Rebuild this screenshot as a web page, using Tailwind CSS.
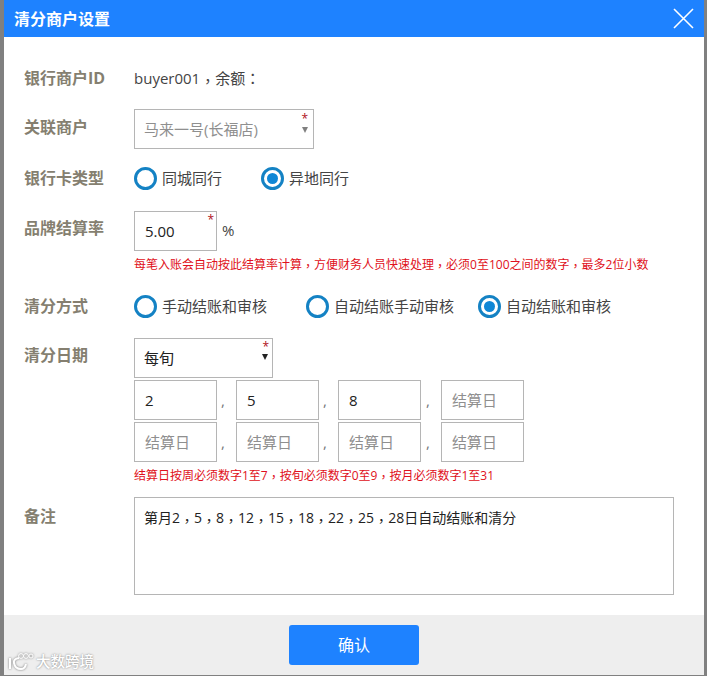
<!DOCTYPE html>
<html lang="en">

<head>
    <meta charset="UTF-8">
    <meta name="viewport" content="width=device-width, initial-scale=1.0">
    <title>清分商户设置</title>
    <script src="https://cdn.jsdelivr.net/npm/@tailwindcss/browser@4"></script>
</head>

<body class="bg-[#808080] font-['Open_Sans','Noto_Sans_CJK_SC',sans-serif]">
    <div class="relative w-[707px] h-[676px] overflow-hidden pl-1 pb-px">
        <div class="flex flex-col w-[700px] h-[675px] bg-white">
            <!-- header -->
            <div class="flex items-center justify-between h-[37px] bg-[#1e82ff] pl-[10px] pr-[10px] shrink-0">
                <h2 class="text-[16px] font-bold text-white">清分商户设置</h2>
                <svg width="21" height="21" viewBox="0 0 21 21" class="stroke-white" fill="none" stroke-width="1.6">
                    <path d="M1 1 L20 20 M20 1 L1 20" />
                </svg>
            </div>

            <!-- form -->
            <div class="flex-1 pl-5 pt-[29px] text-[15px] text-[#444]">
                <div class="flex items-center h-6">
                    <label class="w-[110px] text-[16px] font-bold text-[#857f70]">银行商户ID</label>
                    <span>buyer001<span class="relative top-[3px] font-['Noto_Sans_CJK_TC']">，</span>余额<span class="font-['Noto_Sans_CJK_TC']">：</span></span>
                </div>

                <div class="flex items-center mt-[19px]">
                    <label class="w-[110px] text-[16px] font-bold text-[#857f70] -mt-1">关联商户</label>
                    <div class="relative flex items-center w-[180px] h-10 border border-[#b5b5b5] pl-[9px] text-[#8f8f8f]">
                        马来一号(长福店)
                        <span class="absolute right-[5px] top-[1px] text-[12px] leading-[16px] text-[#b01020]">*</span>
                        <span class="absolute right-[5px] top-[17px] border-x-[3.5px] border-t-[6px] border-x-transparent border-t-[#808080]"></span>
                    </div>
                </div>

                <div class="flex items-center mt-[18px] h-[22px]">
                    <label class="w-[110px] text-[16px] font-bold text-[#857f70]">银行卡类型</label>
                    <div class="flex items-center gap-[5px] w-[127px]">
                        <span class="size-[23px] rounded-full border-[3px] border-[#1482c4]"></span>
                        <span>同城同行</span>
                    </div>
                    <div class="flex items-center gap-[5px]">
                        <span class="flex items-center justify-center size-[23px] rounded-full border-[3px] border-[#1482c4]"><span class="size-[11px] rounded-full bg-[#0f87d6]"></span></span>
                        <span>异地同行</span>
                    </div>
                </div>

                <div class="flex mt-[22px]">
                    <label class="w-[110px] pt-[5px] text-[16px] font-bold text-[#857f70]">品牌结算率</label>
                    <div>
                        <div class="flex items-center">
                            <div class="relative flex items-center w-[83px] h-10 border border-[#b5b5b5] pl-[10px] text-[#222]">
                                5.00
                                <span class="absolute right-[2px] top-0 text-[12px] leading-[16px] text-[#b01020]">*</span>
                            </div>
                            <span class="ml-[5px] -mt-[2px]">%</span>
                        </div>
                        <p class="mt-[4px] text-[12px] leading-[18px] text-[#e01020] whitespace-nowrap">每笔入账会自动按此结算率计算<span class="relative top-[2px] font-['Noto_Sans_CJK_TC']">，</span>方便财务人员快速处理<span class="relative top-[2px] font-['Noto_Sans_CJK_TC']">，</span>必须0至100之间的数字<span class="relative top-[2px] font-['Noto_Sans_CJK_TC']">，</span>最多2位小数</p>
                    </div>
                </div>

                <div class="flex items-center mt-[21px] h-[22px]">
                    <label class="w-[110px] text-[16px] font-bold text-[#857f70]">清分方式</label>
                    <div class="flex items-center gap-[5px] w-[172px]">
                        <span class="size-[23px] rounded-full border-[3px] border-[#1482c4]"></span>
                        <span>手动结账和审核</span>
                    </div>
                    <div class="flex items-center gap-[5px] w-[172px]">
                        <span class="size-[23px] rounded-full border-[3px] border-[#1482c4]"></span>
                        <span>自动结账手动审核</span>
                    </div>
                    <div class="flex items-center gap-[5px]">
                        <span class="flex items-center justify-center size-[23px] rounded-full border-[3px] border-[#1482c4]"><span class="size-[11px] rounded-full bg-[#0f87d6]"></span></span>
                        <span>自动结账和审核</span>
                    </div>
                </div>

                <div class="flex mt-[21px]">
                    <label class="w-[110px] pt-[5px] text-[16px] font-bold text-[#857f70]">清分日期</label>
                    <div>
                        <div class="relative flex items-center w-[139px] h-10 border border-[#b5b5b5] pl-[9px] text-[#222]">
                            每旬
                            <span class="absolute right-[3px] top-0 text-[12px] leading-[16px] text-[#b01020]">*</span>
                            <span class="absolute right-[4px] top-[15px] border-x-[3.5px] border-t-[6px] border-x-transparent border-t-[#222]"></span>
                        </div>
                        <div class="grid grid-cols-[102px_102px_103px_83px] gap-y-[2px] mt-[2px]">
                            <div class="relative flex items-center w-[83px] h-10 border border-[#b5b5b5] pl-[10px] text-[#222]">2<span class="absolute left-[86px] top-[8px] text-[#777]">,</span></div>
                            <div class="relative flex items-center w-[83px] h-10 border border-[#b5b5b5] pl-[10px] text-[#222]">5<span class="absolute left-[86px] top-[8px] text-[#777]">,</span></div>
                            <div class="relative flex items-center w-[83px] h-10 border border-[#b5b5b5] pl-[10px] text-[#222]">8<span class="absolute left-[87px] top-[8px] text-[#777]">,</span></div>
                            <div class="flex items-center w-[83px] h-10 border border-[#b5b5b5] pl-[10px] text-[#8f8f8f]">结算日</div>
                            <div class="relative flex items-center w-[83px] h-10 border border-[#b5b5b5] pl-[10px] text-[#8f8f8f]">结算日<span class="absolute left-[86px] top-[8px] text-[#777]">,</span></div>
                            <div class="relative flex items-center w-[83px] h-10 border border-[#b5b5b5] pl-[10px] text-[#8f8f8f]">结算日<span class="absolute left-[86px] top-[8px] text-[#777]">,</span></div>
                            <div class="relative flex items-center w-[83px] h-10 border border-[#b5b5b5] pl-[10px] text-[#8f8f8f]">结算日<span class="absolute left-[87px] top-[8px] text-[#777]">,</span></div>
                            <div class="flex items-center w-[83px] h-10 border border-[#b5b5b5] pl-[10px] text-[#8f8f8f]">结算日</div>
                        </div>
                        <p class="mt-[4px] text-[12px] leading-[18px] text-[#e01020] whitespace-nowrap">结算日按周必须数字1至7<span class="relative top-[2px] font-['Noto_Sans_CJK_TC']">，</span>按旬必须数字0至9<span class="relative top-[2px] font-['Noto_Sans_CJK_TC']">，</span>按月必须数字1至31</p>
                    </div>
                </div>

                <div class="flex mt-[12px]">
                    <label class="w-[110px] pt-[7px] text-[16px] font-bold text-[#857f70]">备注</label>
                    <div class="w-[540px] h-[98px] border border-[#b5b5b5] px-[9px] py-[9px] text-[14px] text-[#222]">第月2<span class="relative top-[3px] font-['Noto_Sans_CJK_TC']">，</span>5<span class="relative top-[3px] font-['Noto_Sans_CJK_TC']">，</span>8<span class="relative top-[3px] font-['Noto_Sans_CJK_TC']">，</span>12<span class="relative top-[3px] font-['Noto_Sans_CJK_TC']">，</span>15<span class="relative top-[3px] font-['Noto_Sans_CJK_TC']">，</span>18<span class="relative top-[3px] font-['Noto_Sans_CJK_TC']">，</span>22<span class="relative top-[3px] font-['Noto_Sans_CJK_TC']">，</span>25<span class="relative top-[3px] font-['Noto_Sans_CJK_TC']">，</span>28日自动结账和清分</div>
                </div>
            </div>

            <!-- footer -->
            <div class="flex items-center justify-center h-[60px] bg-[#eeeeee] shrink-0">
                <button class="w-[130px] h-10 rounded-[3px] bg-[#1e82ff] text-[16px] text-white">确认</button>
            </div>
        </div>

        <!-- watermark -->
        <div class="absolute left-[8px] top-[652px] flex items-center gap-[2px]">
            <svg width="26" height="19" viewBox="0 0 26 19" fill="none" class="drop-shadow-[0_0_1px_#777]" stroke="#fff" stroke-width="2">
                <path d="M2 6 V17 M11 6 Q5 7 6 11 Q7 17 13 17 Q17 17 18 12" />
                <circle cx="13" cy="4" r="2.4" stroke-width="1" />
                <circle cx="18" cy="4" r="2.4" stroke-width="1" />
                <circle cx="23" cy="4" r="2" stroke-width="1" />
            </svg>
            <span class="text-[14.5px] leading-[18px] font-medium text-white [text-shadow:0_0_2px_#777]">大数跨境</span>
        </div>
    </div>
</body>

</html>
